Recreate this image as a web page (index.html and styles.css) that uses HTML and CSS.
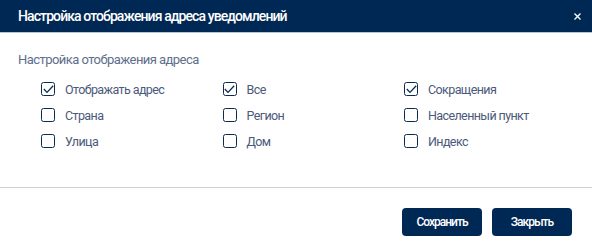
FILE: index.html
```html
<!DOCTYPE html>
<html lang="ru">
<head>
<meta charset="utf-8">
<title>Настройка отображения адреса уведомлений</title>
<link rel="stylesheet" href="styles.css">
</head>
<body>
<div class="modal">
  <div class="modal-header">
    <span class="modal-title">Настройка отображения адреса уведомлений</span>
    <span class="close" aria-label="Закрыть">
      <svg width="7" height="7" viewBox="0 0 7 7"><path d="M0.5 0.5 L6.5 6.5 M6.5 0.5 L0.5 6.5" stroke="#fff" stroke-width="1.3" fill="none"/></svg>
    </span>
  </div>
  <div class="modal-body">
    <div class="section-title">Настройка отображения адреса</div>
    <div class="options">
      <label class="opt"><span class="box checked"><svg width="11" height="9" viewBox="0 0 11 9"><path d="M0.8 4 L4 7.4 L10.2 0.8" stroke="#0b2a52" stroke-width="1.3" fill="none"/></svg></span>Отображать адрес</label>
      <label class="opt"><span class="box checked"><svg width="11" height="9" viewBox="0 0 11 9"><path d="M0.8 4 L4 7.4 L10.2 0.8" stroke="#0b2a52" stroke-width="1.3" fill="none"/></svg></span>Все</label>
      <label class="opt"><span class="box checked"><svg width="11" height="9" viewBox="0 0 11 9"><path d="M0.8 4 L4 7.4 L10.2 0.8" stroke="#0b2a52" stroke-width="1.3" fill="none"/></svg></span>Сокращения</label>
      <label class="opt"><span class="box"></span>Страна</label>
      <label class="opt"><span class="box"></span>Регион</label>
      <label class="opt"><span class="box"></span>Населенный пункт</label>
      <label class="opt"><span class="box"></span>Улица</label>
      <label class="opt"><span class="box"></span>Дом</label>
      <label class="opt"><span class="box"></span>Индекс</label>
    </div>
  </div>
  <div class="modal-footer">
    <button class="btn">Сохранить</button>
    <button class="btn">Закрыть</button>
  </div>
</div>
</body>
</html>
```
FILE: styles.css
```css
html, body {
  margin: 0;
  padding: 0;
  background: #ffffff;
}
body {
  font-family: Roboto, "Noto Sans", sans-serif;
}
.modal {
  width: 592px;
  height: 243px;
  display: flex;
  flex-direction: column;
}
.modal-header {
  height: 32px;
  background: #002855;
  border-bottom: 1px solid #b9c3d6;
  display: flex;
  align-items: center;
  justify-content: space-between;
  padding: 0 11px 0 18px;
}
.modal-title {
  color: #ffffff;
  font-size: 14px;
  font-weight: 500;
  line-height: 16px;
  letter-spacing: -0.9px;
}
.close {
  display: flex;
  width: 7px;
  height: 7px;
  margin-top: 1px;
}
.modal-body {
  padding: 19px 18px 0 18px;
  height: 135px;
  border-bottom: 1px solid #d0d0d0;
}
.section-title {
  font-size: 13px;
  line-height: 16px;
  color: #5e6e8c;
  letter-spacing: -0.55px;
}
.options {
  margin-top: 8px;
  margin-left: 23px;
  display: grid;
  grid-template-columns: 181.5px 181.5px 1fr;
  grid-auto-rows: 26px;
}
.opt {
  display: flex;
  align-items: center;
  gap: 10px;
  font-size: 12.5px;
  color: #4b5a7a;
  letter-spacing: -0.6px;
}
.box {
  width: 12px;
  height: 12px;
  border: 1.5px solid #0b2a52;
  border-radius: 2.5px;
  display: flex;
  align-items: center;
  justify-content: center;
  flex: none;
}
.modal-footer {
  display: flex;
  justify-content: flex-end;
  gap: 10px;
  padding: 20px 20px 0 0;
}
.btn {
  width: 80px;
  height: 28px;
  border: none;
  border-radius: 4px;
  background: #002855;
  color: #ffffff;
  font-family: Roboto, "Noto Sans", sans-serif;
  font-size: 12px;
  font-weight: 500;
  letter-spacing: -1px;
  padding: 0;
}
```
